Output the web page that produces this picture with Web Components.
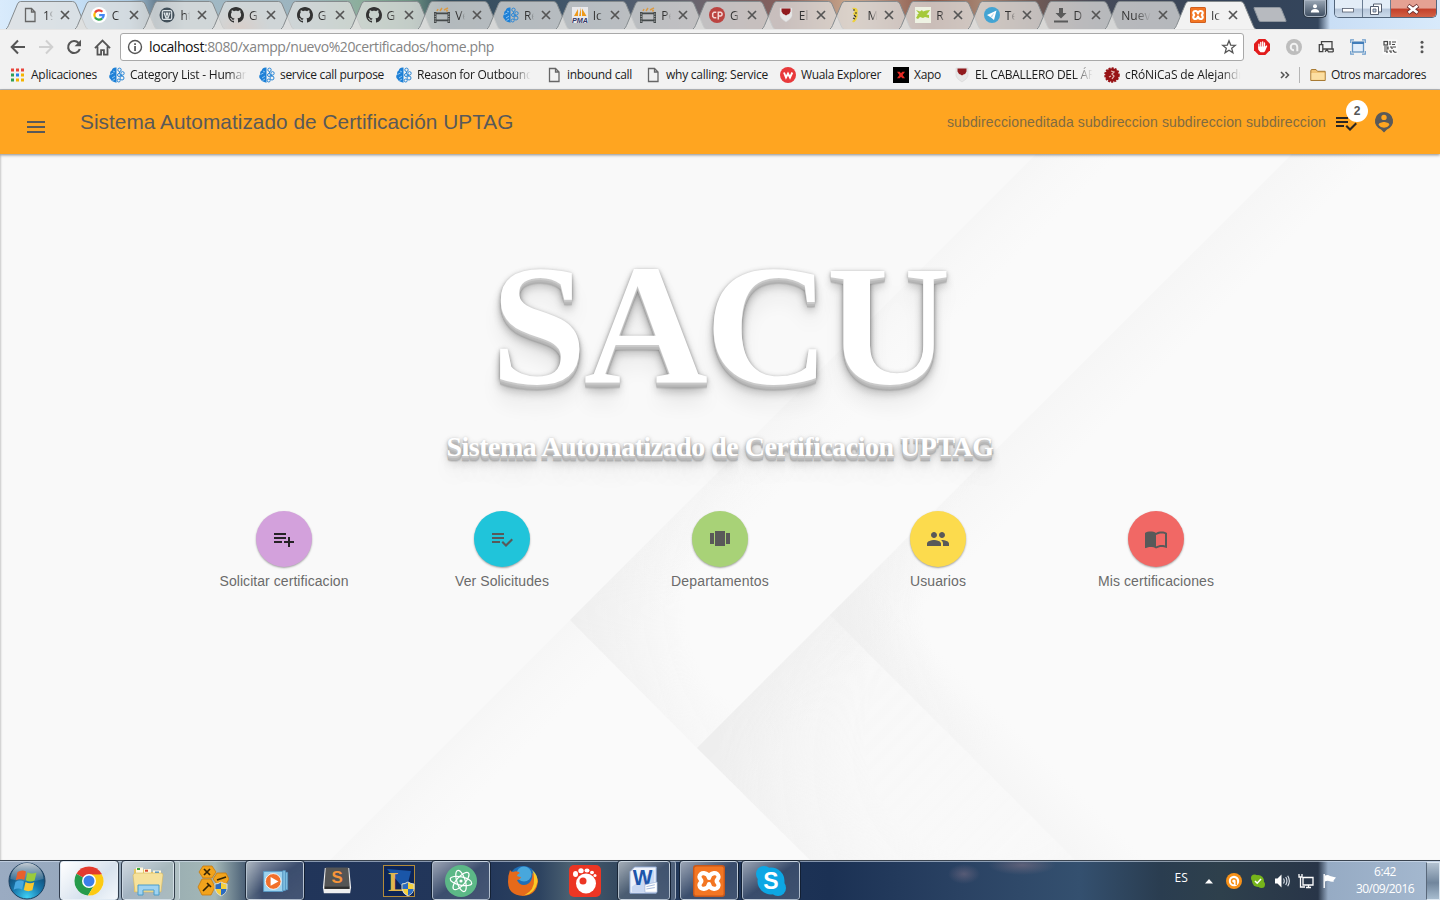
<!DOCTYPE html>
<html lang="es">
<head>
<meta charset="utf-8">
<title>SACU</title>
<style>
html,body{margin:0;height:100%;overflow:hidden}
body{display:flex;flex-direction:column;width:1440px;height:900px;background:#f9f9f9;font-family:"Liberation Sans",Arial,sans-serif}
</style>
</head>
<body>
<tab-strip></tab-strip>
<nav-bar></nav-bar>
<bookmarks-bar></bookmarks-bar>
<app-header></app-header>
<app-main></app-main>
<task-bar></task-bar>
<script>
const ICONS = {
page:[16,`<path d="M3.500 1.500h6l3.500 3.500v9.500h-9.500zM9.500 1.500v3.500h3.500" fill="none" stroke="#666" stroke-width="1.300"/>`],
google:[16,`<circle cx="8" cy="8" r="8" fill="#fff"/><g fill="none" stroke-width="2.200"><path d="M4 5.600A4.700 4.700 0 0 1 11.400 4.700" stroke="#ea4335"/><path d="M4 10.400A4.800 4.800 0 0 1 4 5.600" stroke="#fbbc05"/><path d="M11.200 11.400A4.700 4.700 0 0 1 4 10.400" stroke="#34a853"/><path d="M8.200 8.100h4.500A4.700 4.700 0 0 1 11.200 11.400" stroke="#4285f4"/></g>`],
manual:[16,`<circle cx="8" cy="8" r="7.500" fill="#42505a"/><rect x="3.300" y="3.600" width="9.400" height="8.800" rx="1.500" fill="none" stroke="#dde4e8" stroke-width="1.200"/><path d="M5 5.500l2 5.500h2l2-5.500M7 5.500l1 3 1-3" fill="none" stroke="#dde4e8" stroke-width="1.300"/>`],
github:[16,`<path fill="#333" d="M8 0C3.580 0 0 3.580 0 8c0 3.540 2.290 6.530 5.470 7.590.4.070.55-.17.55-.38 0-.19-.01-.82-.01-1.490-2.010.37-2.530-.49-2.690-.94-.09-.23-.48-.94-.82-1.130-.28-.15-.68-.52-.01-.53.63-.01 1.080.58 1.230.82.72 1.210 1.870.87 2.330.66.07-.52.28-.87.51-1.070-1.780-.2-3.640-.89-3.640-3.950 0-.87.31-1.590.82-2.150-.08-.2-.36-1.020.08-2.120 0 0 .67-.21 2.200.82.64-.18 1.320-.27 2-.27s1.360.09 2 .27c1.530-1.040 2.200-.82 2.200-.82.44 1.100.16 1.920.08 2.120.51.56.82 1.270.82 2.150 0 3.070-1.870 3.750-3.650 3.950.29.25.54.73.54 1.480 0 1.070-.01 1.930-.01 2.200 0 .21.15.46.55.38A8.010 8.010 0 0016 8c0-4.420-3.580-8-8-8z"/>`],
film:[16,`<path d="M0 5h2.500v11H0zM13.500 5H16v11h-2.500zM2 5.500h12v1.700H2zM2 12.500h12v1.800H2z" fill="#454a4b"/><path d="M1.200 6.500v9M14.800 6.500v9" stroke="#ccc" stroke-dasharray="1 1.400"/><path d="M3 4l1-2M6 4l2-3M10 3l4-2M12 4l2-.5" stroke="#d99a45" stroke-width="1.500"/>`],
brain:[16,`<path d="M7.500.5C4 .3 3 2 2.800 3.500 1 4.500 1 6 1.200 7-.3 8.500 0 11 1.500 12c.5 2 2.500 3 6 3.700z" fill="#1d80d6"/><path d="M1.500 7.500l3-1.500M3 11l3-2M4 4l2 1M3.500 13.500l2.500-1.500" stroke="#a8d6fa" stroke-width=".8"/><g fill="none" stroke="#2b87d6" stroke-width="1"><circle cx="10.500" cy="2.800" r="1.700"/><circle cx="13.500" cy="6.300" r="1.700"/><circle cx="10" cy="8" r="1.500"/><circle cx="13" cy="11" r="2"/><circle cx="9.700" cy="13.500" r="1.500"/><path d="M11 4.500l-1 2M11.500 8l2 1"/></g>`],
pma:[16,`<rect width="16" height="16" fill="#e9e9ec"/><path d="M2 9L6 2v7zM7 9L9 .5V9zM10 9V1.500L14.500 9z" fill="#ee9a1c"/><text x="0" y="15.500" font-size="7" font-weight="bold" font-style="italic" textLength="16" lengthAdjust="spacingAndGlyphs" fill="#333767" font-family="Liberation Sans">PMA</text>`],
cp:[16,`<circle cx="8" cy="8" r="8" fill="#bb4340"/><path d="M7.300 5.200H5L3.700 6.500v3L5 10.800h2.300M9.300 12.500V5.200h2.500L13 6.300v1.700L11.800 9H9.300" fill="none" stroke="#f4d5d3" stroke-width="1.500"/>`],
shield:[16,`<path d="M2 1h12v8q-1 3-6 6Q3 12 2 9z" fill="#e7e7e7" stroke="#d0d0d0" stroke-width=".5"/><path d="M3.500 1.500h9v3q-1 3-3 3L8 8.500 6.500 7.500q-2-.5-3-3z" fill="#911b1e"/>`],
bird:[16,`<path d="M6 1q7-1 5.500 5 1 5-3 9-3 1-2-1 3-3 2-6-3-1 0-3 0-2-2.500-4z" fill="#edd13c"/><path d="M7 3h2M9 6h2M8 8l2 2M9 12l-2-1" stroke="#333" stroke-width="1.200"/>`],
green:[16,`<rect width="16" height="16" fill="#eef2e3"/><path d="M1 3l4 1.500L7 3l1 1.500 3-1 4-.5-2 3-1.500 1.500 2.500.5v3l-4-1-2 1-3-1-2 2-2-1 2-3.500L1 8l3-1.500z" fill="#a5c93a"/>`],
telegram:[16,`<circle cx="8" cy="8" r="8" fill="#43a4d3"/><path d="M3 8l9.500-4.500L10 13l-3-2.500z" fill="#fff"/><path d="M6.500 9.500l4-4-2.500 5z" fill="#b4d9ec"/>`],
download:[16,`<path d="M6 1h4v5h3.500L8 11.500 2.500 6H6zM1 13.500h14v2H1z" fill="#5a5a5a"/>`],
xampp:[16,`<rect width="16" height="16" rx="1.500" fill="#c7591d"/><rect x=".7" y=".7" width="14.600" height="14.600" rx="1.100" fill="#f37623"/><path d="M8 6.500C7.600 3.500 3.400 3.200 3.200 5.900 3.200 7 4.200 7.300 4.200 8S3.200 9 3.200 10.100C3.400 12.800 7.600 12.500 8 9.500 8.400 12.500 12.600 12.800 12.800 10.100 12.800 9 11.800 8.700 11.800 8S12.800 7 12.800 5.900C12.600 3.200 8.400 3.500 8 6.500z" fill="none" stroke="#fff" stroke-width="2.100" stroke-linejoin="round"/>`],
close:[12,`<path d="M2 2l8 8M10 2l-8 8" stroke="#555" stroke-width="1.700"/>`],
apps:[16,`<g><path d="M1 1.500h3v3H1z" fill="#e8453c"/><path d="M6 1.500h3v3H6z" fill="#e8453c"/><path d="M11 1.500h3v3h-3z" fill="#e8453c"/><path d="M1 6.500h3v3H1z" fill="#2f9e55"/><path d="M6 6.500h3v3H6z" fill="#2680eb"/><path d="M11 6.500h3v3h-3z" fill="#f4b400"/><path d="M1 11.500h3v3H1z" fill="#2f9e55"/><path d="M6 11.500h3v3H6zM11 11.500h3v3h-3z" fill="#f4b400"/></g>`],
wuala:[16,`<circle cx="8" cy="8" r="8" fill="#e8393b"/><path d="M4 5.500l2 5 2-4 2 4 2.300-5" fill="none" stroke="#fff" stroke-width="1.900"/>`],
xapo:[16,`<rect width="16" height="16" fill="#000"/><path d="M4 4.800h2.700L8 6.300l1.300-1.500H12L9.600 8l2.400 3.200H9.300L8 9.700l-1.300 1.500H4L6.400 8z" fill="#e42a24"/>`],
cronicas:[16,`<circle cx="8" cy="8" r="6.800" fill="#971316"/><circle cx="8" cy="8" r="6.900" fill="none" stroke="#971316" stroke-width="1.800" stroke-dasharray="2 1.200"/><path d="M7 4l3 1-2 2 2 2-2 3M5 10l2-1" fill="none" stroke="#e4b9b5" stroke-width="1.300"/>`],
folder:[16,`<path d="M.8 3.800q0-1.300 1.200-1.300h4l1.500 1.800h7.700v9.200H.8z" fill="#f1c477" stroke="#a87b34" stroke-width="1"/><path d="M1.500 6h13v6.800h-13z" fill="#fcdfa2"/>`],
back:[16,`<path d="M15 8H2.500M8 1.500L1.700 8 8 14.500" fill="none" stroke="#555" stroke-width="2"/>`],
forward:[16,`<path d="M1 8h12.500M8 1.500L14.300 8 8 14.500" fill="none" stroke="#d0d0d0" stroke-width="2"/>`],
reload:[16,`<path d="M13.800 10A6 6 0 1 1 12.600 4" fill="none" stroke="#555" stroke-width="2.100"/><path d="M15 .8v6.400H8.600z" fill="#555"/>`],
home:[18,`<path d="M1 9.700L9 1.700l8 8M3.700 8v8.500H7.500v-4.700h3v4.700h3.800V8" fill="none" stroke="#555" stroke-width="1.900"/>`],
info:[16,`<circle cx="8" cy="8" r="6.500" fill="none" stroke="#555" stroke-width="1.400"/><path d="M7.200 4.200h1.700v1.700H7.200zM7.200 7h1.700v5H7.200z" fill="#555"/>`],
star:[16,`<path d="M8 1.800l1.700 4.300 4.600.3-3.600 2.900 1.200 4.500L8 11.300l-3.900 2.500 1.200-4.500L1.700 6.400l4.600-.3z" fill="none" stroke="#555" stroke-width="1.300"/>`],
adblock:[16,`<path d="M4.700 0h6.600L16 4.700v6.600L11.300 16H4.700L0 11.300V4.700z" fill="#e21c1c"/><path d="M4.900 9V5.200M6.800 8V3.300M8.700 8V2.800M10.500 9V4" stroke="#fff" stroke-width="1.300" stroke-linecap="round"/><path d="M4.300 7.500h6.800l1.400-1.300.8.800-2.300 5.300-1 1H6.500L4.300 10.800z" fill="#fff"/>`],
avast:[16,`<circle cx="8" cy="8" r="8" fill="#bdbdbd"/><path d="M11.300 12.300V8A3.300 3.300 0 1 0 8 11.300" fill="none" stroke="#f1f1f1" stroke-width="2"/>`],
devices:[16,`<path d="M3.500 5.500V2.600h10.500V10M1.300 5.600h3.500v7H1.300zM5 10h10.200v3M7 12.800l2-2.200 1.500 2.200h4.700" fill="none" stroke="#444" stroke-width="1.300"/>`],
capture:[16,`<rect x="2.500" y="3" width="11" height="10" fill="#e2eefb" stroke="#6595c2" stroke-width="1.300"/><path d="M2 4h12" stroke="#417dba" stroke-width="2"/><path d="M.7 4V.8H4M12 .8h3.300V4M.7 12v3.200H4M12 15.200h3.300V12" fill="none" stroke="#6b9ccc" stroke-width="1.200"/>`],
qr:[16,`<rect x=".5" y=".5" width="15" height="15" rx="1" fill="#fafafa"/><g fill="none" stroke="#444" stroke-width="1.200"><rect x="2" y="2.500" width="3.500" height="3.500"/><path d="M8 2v4M10 3h4M10 5.500h3M2 8h4v2H2M8 8h2v2M11 8h3M2 12h3v2M7 12h2v2M11 11q1 3 3.500 2"/></g>`],
more:[16,`<circle cx="8" cy="3.200" r="1.500" fill="#555"/><circle cx="8" cy="8" r="1.500" fill="#555"/><circle cx="8" cy="12.800" r="1.500" fill="#555"/>`],
overflow:[12,`<path d="M2 3l3 3-3 3M6.500 3l3 3-3 3" fill="none" stroke="#555" stroke-width="1.500"/>`],
menu:[24,`<path d="M3 18h18v-2H3v2zm0-5h18v-2H3v2zm0-7v2h18V6H3z" fill="currentColor"/>`],
listadd:[24,`<path d="M14 10H2v2h12v-2zm0-4H2v2h12V6zm4 8v-4h-2v4h-4v2h4v4h2v-4h4v-2h-4zM2 16h8v-2H2v2z" fill="currentColor"/>`],
listcheck:[24,`<path d="M14 10H2v2h12v-2zm0-4H2v2h12V6zM2 16h8v-2H2v2zm19.500-4.500L23 13l-6.990 7-4.510-4.500L13 14l3.010 3 5.490-5.500z" fill="currentColor"/>`],
carousel:[24,`<path d="M7 19h10V4H7v15zm-5-2h4V6H2v11zM18 6v11h4V6h-4z" fill="currentColor"/>`],
group:[24,`<path d="M16 11c1.660 0 2.990-1.340 2.990-3S17.660 5 16 5c-1.660 0-3 1.340-3 3s1.340 3 3 3zm-8 0c1.660 0 2.990-1.340 2.990-3S9.660 5 8 5C6.340 5 5 6.340 5 8s1.340 3 3 3zm0 2c-2.330 0-7 1.170-7 3.500V19h14v-2.500c0-2.330-4.670-3.500-7-3.500zm8 0c-.29 0-.62.020-.97.050 1.160.84 1.970 1.970 1.970 3.450V19h6v-2.500c0-2.330-4.670-3.500-7-3.500z" fill="currentColor"/>`],
book:[24,`<path d="M21 5c-1.110-.35-2.330-.5-3.500-.5-1.950 0-4.050.4-5.500 1.500-1.450-1.100-3.550-1.500-5.500-1.500S2.450 4.900 1 6v14.650c0 .25.25.5.5.5.1 0 .15-.05.25-.05C3.100 20.450 5.050 20 6.500 20c1.950 0 4.050.4 5.500 1.500 1.350-.85 3.800-1.500 5.500-1.500 1.650 0 3.350.3 4.750 1.050.1.050.15.050.25.050.25 0 .5-.25.5-.5V6c-.6-.45-1.250-.75-2-1zm0 13.500c-1.100-.35-2.300-.5-3.500-.5-1.700 0-4.150.65-5.500 1.500V8c1.350-.85 3.800-1.500 5.500-1.500 1.200 0 2.400.15 3.500.5v11.500z" fill="currentColor"/>`],
account:[24,`<path fill-rule="evenodd" d="M12 2a9 9 0 0 0-3 17.500l3 3 3-3A9 9 0 0 0 12 2zm0 2.700a2.700 2.700 0 1 1 0 5.400 2.700 2.700 0 0 1 0-5.400zM12 17.700a6.600 6.600 0 0 1-5.400-2.800c0-1.800 3.600-2.800 5.400-2.800s5.400 1 5.400 2.800A6.600 6.600 0 0 1 12 17.700z" fill="currentColor"/>`],
start:[38,`<defs><radialGradient id="a" cx=".5" cy=".95" r=".9"><stop offset="0" stop-color="#3fd0f4"/><stop offset=".45" stop-color="#1878ad"/><stop offset="1" stop-color="#0d3559"/></radialGradient><linearGradient id="b" x2="0" y2="1"><stop offset="0" stop-color="#fff" stop-opacity=".75"/><stop offset="1" stop-color="#fff" stop-opacity=".1"/></linearGradient></defs><circle cx="19" cy="19" r="18" fill="url(#a)" stroke="#1d3f5e"/><path d="M2.500 17a16.500 16 0 0 1 33 0Q19 22 2.500 17z" fill="url(#b)"/><path d="M9.500 10q4.500-2.800 8.500-.5l-1.700 8.500q-4.300-2-8.500.3z" fill="#e8602c"/><path d="M19.500 10.300q4 2.300 9 .2l-1.900 8q-4.600 2-8.800-.3z" fill="#9acb3c"/><path d="M7.500 19.700q4.500-2.200 8.500-.2l-1.900 8q-3.900-2-8.500.3z" fill="#48a8e0"/><path d="M17.500 20q4.200 2.200 8.800.3l-1.900 8q-4.500 1.800-8.600-.3z" fill="#fbc72d"/>`],
chrome:[32,`<circle cx="16" cy="16" r="14.500" fill="#fff"/><path d="M16 16L3.400 8.800A14.500 14.500 0 0 1 28.600 8.800z" fill="#e33b2e"/><path d="M16 16L3.400 8.800A14.500 14.500 0 0 0 15 30.500l6.800-11.200z" fill="#259b4b"/><path d="M16 9.300h12.800A14.500 14.500 0 0 1 15 30.500l6.800-11.200z" fill="#fcca14"/><path d="M16 9.300h12.800l-.4-.8H9z" fill="#e33b2e"/><circle cx="16" cy="16" r="7" fill="#fff"/><circle cx="16" cy="16" r="5.500" fill="#3c7fea"/>`],
explorer:[32,`<path d="M2 4h9l2 3h15v20H2z" fill="#e8c764"/><path d="M4 2.500h7V8H4zM12 4h7v5h-7zM21 5.500h8V10h-8z" fill="#fff8dc"/><path d="M5 3h3v2H5z" fill="#3ba639"/><path d="M13 4.700h3v2h-3z" fill="#d7462d"/><path d="M23 6.500h4v2h-4z" fill="#3a8ddb"/><path d="M1 10q1-2 3-2h25q2 0 2 2l-2 17H3z" fill="#f6e19b" stroke="#d3b55c" stroke-width=".6"/><path d="M6 30V20h21v10h-5v-5H11v5z" fill="#9fd3f1" stroke="#4a9cc9" stroke-width="1"/>`],
bee:[32,`<g fill="#f2a31c" stroke="#c67a0c" stroke-width=".8"><path d="M6 1h9l4 6-4 6H6L2 7z"/><path d="M20 8h9l3 6-3 5h-9l-4-5z"/><path d="M5 14h9l4 8-4 8H5l-4-8z"/></g><path d="M7 4l6 6M13 4L7 10M20 15l9-3M6 26l6-6M10 18l4 4" stroke="#342405" stroke-width="1.700"/><path d="M18 19q3 0 6-2 3 2 6 2v5q-1 5-6 7-5-2-6-7z" fill="#f6d13b" stroke="#d5dbe3" stroke-width="1"/><path d="M24 17.500V24h-5.500v-4.500q3 0 5.500-2zM24 24h5.500q-.5 4.500-5.500 6.500z" fill="#2a6bc2"/>`],
wmp:[32,`<path d="M3 5h22v23H3z" fill="#9cd2ee" stroke="#5699c7"/><path d="M25 4h3v23h-3zM28 6h2.500v20H28z" fill="#7ebde0" stroke="#4d8fbd" stroke-width=".6"/><circle cx="14" cy="16.500" r="9" fill="#f1702a" stroke="#fff" stroke-width="1"/><path d="M11 11.500l9 5-9 5z" fill="#fff"/>`],
sublime:[32,`<path d="M3 2h26l2 21-1 6H2l-1-6z" fill="#efefef"/><path d="M4 1.500h24l1.500 20h-27z" fill="#555"/><path d="M2.500 21.500h27v3h-27z" fill="#2f2f2f"/><text x="16" y="18" text-anchor="middle" font-size="18" font-weight="bold" fill="#f7953a" font-family="Liberation Sans">S</text>`],
lol:[32,`<rect x=".5" y=".5" width="31" height="31" fill="#0d2557" stroke="#b38b3a"/><path d="M4 4l24 2-5 20z" fill="#1a56a8"/><text x="5" y="26" font-size="27" font-weight="bold" fill="#e0b64d" font-family="Liberation Serif">L</text><path d="M19 19q3 0 6-2 3 2 6 2v5q-1 5-6 7-5-2-6-7z" fill="#f6d13b" stroke="#d5dbe3"/><path d="M25 17.500V24h-5.500v-4.500q3 0 5.500-2zM25 24h5.500q-.5 4.500-5.500 6.500z" fill="#2a6bc2"/>`],
atom:[32,`<circle cx="16" cy="16" r="16" fill="#5cb887"/><g fill="none" stroke="#fff" stroke-width="1.200"><ellipse cx="16" cy="16" rx="11" ry="4.200" transform="rotate(12 16 16)"/><ellipse cx="16" cy="16" rx="11" ry="4.200" transform="rotate(72 16 16)"/><ellipse cx="16" cy="16" rx="11" ry="4.200" transform="rotate(132 16 16)"/></g><circle cx="16" cy="16" r="1.600" fill="#fff"/>`],
firefox:[32,`<circle cx="16" cy="15" r="14" fill="#1e6fb8"/><circle cx="17" cy="9" r="7.500" fill="#48a7dc"/><path d="M3 5q1 2 3 2 4-2 7 1-3 1-3 3 2 1 4 1-1 3-4 3 2 5 7 5 6 0 8-7 1-3 0-5 5 3 6 8Q30 30 16 31 1 30 1 17 1 10 3 5z" fill="#e66a1b"/><path d="M25 5q6 5 5.500 12Q28 29 17 30.500 28 25 27 14q0-6-2-9z" fill="#fbc926"/>`],
gom:[32,`<rect width="32" height="32" rx="5" fill="#ec3624"/><circle cx="17" cy="18.500" r="10" fill="#fff"/><circle cx="14" cy="16" r="3.500" fill="#ec3624"/><g fill="#fff"><ellipse cx="6.500" cy="9" rx="2.500" ry="3"/><ellipse cx="12" cy="5.800" rx="2.700" ry="2.500"/><ellipse cx="18" cy="5.500" rx="2.500" ry="2"/><ellipse cx="23" cy="7.500" rx="2" ry="1.800"/><ellipse cx="26" cy="10.500" rx="1.500" ry="1.500"/></g>`],
word:[32,`<path d="M6 1h23v28H1V6z" fill="#edf2fb" stroke="#8ea8d4"/><path d="M3 22L27 4v24H3z" fill="#c9d8f2"/><text x="4" y="20.500" font-size="23" font-weight="bold" font-family="Liberation Sans" fill="#1c55ab" textLength="21" lengthAdjust="spacingAndGlyphs">W</text><path d="M17 20l13-3v11H17z" fill="#fff" stroke="#91a9d0" stroke-width=".6"/><path d="M18.500 22l9-2M18.500 24.500l9-1.500" stroke="#9fb5da"/>`],
skype:[32,`<circle cx="16" cy="16" r="13.500" fill="#0da7e4"/><circle cx="9" cy="9" r="8" fill="#0da7e4"/><circle cx="23" cy="23" r="8" fill="#0da7e4"/><text x="16" y="24" text-anchor="middle" font-size="23" font-weight="bold" fill="#fff" font-family="Liberation Sans">S</text>`],
trayavast:[16,`<circle cx="8" cy="8" r="8" fill="#f79219"/><circle cx="8" cy="8" r="5.200" fill="#fff"/><path d="M10.300 12V8.200A2.400 2.400 0 1 0 8 10.500" fill="none" stroke="#f79219" stroke-width="1.500"/>`],
trayskype:[16,`<circle cx="8" cy="8" r="6" fill="#76b51b"/><circle cx="4.500" cy="5" r="3.500" fill="#76b51b"/><circle cx="11.500" cy="11.500" r="3.500" fill="#76b51b"/><path d="M5 8l2.200 2.200L11 6" fill="none" stroke="#fff" stroke-width="1.600"/>`],
speaker:[16,`<path d="M1 5.500h2.500L7.500 1.500v13l-4-4H1z" fill="#fff"/><path d="M9.500 5.500q1.500 2.500 0 5M11.700 4q2.500 4 0 8M13.700 2.800q3.300 5.200 0 10.400" fill="none" stroke="#dfe6ee" stroke-width="1.100"/>`],
network:[16,`<path d="M5 4.500h10v7.500H5zM8 14.500h5M10.500 12v2.500M1 1v3h3V1M2.500 4v10H7" fill="none" stroke="#fff" stroke-width="1.300"/>`],
flag:[16,`<path d="M2.200 1v14" stroke="#fff" stroke-width="1.400"/><path d="M3 2.500q3-1 5 .5l6 1.500-2.500 3 .5 1q-3 .5-5-.5-2-.5-4 .5z" fill="#fff"/>`],
up:[10,`<path d="M1 7.500L5 3l4 4.500z" fill="#fff"/>`],
person:[12,`<circle cx="6" cy="3.200" r="2" fill="#fff"/><path d="M1.800 9.500q0-3.500 4.200-3.500t4.200 3.500z" fill="#fff"/>`],
min:[14,`<rect x="1.500" y="6.500" width="11" height="3.500" fill="#fff" stroke="#555e6e" stroke-width=".8"/>`],
max:[14,`<path d="M4.500 2h8v8h-8z" fill="#fff" stroke="#555e6e"/><path d="M1.500 4.500h8v8h-8z" fill="#fff" stroke="#555e6e"/><path d="M4 7h3v3H4z" fill="#b9cbe0" stroke="#555e6e" stroke-width=".8"/>`],
winclose:[14,`<path d="M2 3.500L12 11M12 3.500L2 11" stroke="#6b3030" stroke-width="4.300"/><path d="M2.500 3.800l9 6.900M11.500 3.800l-9 6.900" stroke="#fff" stroke-width="2.700"/>`]
};
const UI = '"Open Sans","Noto Sans",sans-serif';
function define(name, html, init){
  const t = document.createElement('template');
  customElements.define(name, class extends HTMLElement{
    constructor(){ super(); this.attachShadow({mode:'open'}); }
    connectedCallback(){
      t.innerHTML = typeof html === 'function' ? html(this) : html;
      this.shadowRoot.replaceChildren(t.content.cloneNode(true));
      if(init) init(this);
    }
  });
}
define('ui-icon', el => {
  const [box, body] = ICONS[el.getAttribute('name')];
  const s = el.getAttribute('size') || box;
  return `<style>:host{display:block;flex:none;width:${s}px;height:${s}px}svg{display:block}</style><svg width="${s}" height="${s}" viewBox="0 0 ${box} ${box}">${body}</svg>`;
});
/* Spreads a label over a given width by adjusting its tracking. */
define('fit-text', `<style>:host{display:block;white-space:nowrap;flex:none}span{display:inline-block;white-space:nowrap}</style><span><slot></slot></span>`, el => {
  const span = el.shadowRoot.querySelector('span'), w = +el.getAttribute('w');
  const natural = span.getBoundingClientRect().width, n = el.textContent.length;
  span.style.letterSpacing = ((w - natural) / n) + 'px';
});
define('browser-tab', el => {
  const active = el.hasAttribute('active');
  return `<style>:host{display:block;flex:none;width:82px;height:28px;margin-right:-13.300px;position:relative;${active?'z-index:2':''}}
  .bg{position:absolute;inset:0}
  .row{position:relative;display:flex;align-items:center;height:28px;padding:0 0 0 16px;box-sizing:border-box}
  .t{flex:none;width:${el.getAttribute('icon')?10:30}px;margin-left:${el.getAttribute('icon')?5:0}px;margin-right:6px;overflow:hidden;white-space:nowrap;font:12px ${UI};color:#333;-webkit-mask-image:linear-gradient(90deg,#000 45%,transparent)}</style>
  <svg class="bg" width="82" height="28"><path d="M0 28Q1.500 27 2.500 24.500L11.500 3Q12.500 .5 14.500 .5H66.500Q69 .5 70 3L79 24.500Q80 27 81.500 28" fill="${active?'#f2f2f2':'rgba(224,224,222,.74)'}" stroke="#858b8e" stroke-width="1"/></svg>
  <div class="row">${el.getAttribute('icon')?`<ui-icon name="${el.getAttribute('icon')}"></ui-icon>`:''}<span class="t"><slot></slot></span><ui-icon name="close" size="12"></ui-icon></div>`;
});
const TABS = [['page','19'],['google','C'],['manual','ht'],['github','G'],['github','G'],['github','G'],['film','Ve'],['brain','Re'],['pma','Ic'],['film','Pe'],['cp','G'],['shield','El'],['bird','M'],['green','R'],['telegram','Te'],['download','D'],['','Nuev'],['xampp','Ic']];
define('tab-strip', `<style>:host{display:flex;flex:none;height:29px;padding-left:6px;box-sizing:border-box;align-items:flex-start;
 background:radial-gradient(ellipse 30px 22px at 240px 28px,rgba(218,140,110,.6),transparent),linear-gradient(90deg,#d9ebfc 0,#c4def5 80px,#a9c8e0 130px,#6c8394 155px,#a2bac6 185px,#9cb4bf 300px,#8cae9c 360px,#6f9584 410px,#344c5c 445px,#44586d 600px,#68656f 690px,#855f5c 780px,#caa78b 850px,#b99988 870px,#8a5748 930px,#a58471 980px,#6d5956 1040px,#454a59 1100px,#344358 1240px,#34455c 1318px,#c9def5 1330px,#d8eafb 1440px)}
 browser-tab{margin-top:1px}
 .new{height:15px;margin:7px 0 0 13px;background:#b7babf;border:1px solid #8f969f;border-radius:2px;box-sizing:border-box;width:28px;transform:skewX(22deg);flex:none}
 .b{display:flex;align-items:center;justify-content:center;box-sizing:border-box;height:18px}
 .user{width:24px;margin-left:19px;border:1px solid #293542;border-top:0;border-radius:0 0 5px 5px;background:linear-gradient(#9aa7b5,#3b4b5f);box-shadow:inset 0 0 0 1px #a9b4c2;flex:none}
 .win{display:flex;margin-left:7px;width:103px;height:18px;border:1px solid #52657b;border-top:0;border-radius:0 0 5px 5px;overflow:hidden;box-sizing:border-box;flex:none}
 .win .b{width:28px;background:linear-gradient(#e3edf7 45%,#b6c6da 50%,#cfdeed);border-right:1px solid #6a7d93}
 .win .b.x{flex:1;background:linear-gradient(#e5a193 45%,#c3402a 50%,#d4664a);border:0}</style>
 ${TABS.map((t,i)=>`<browser-tab icon="${t[0]}"${i==17?' active':''}>${t[1]}</browser-tab>`).join('')}
 <span class="new"></span><span class="b user"><ui-icon name="person"></ui-icon></span>
 <div class="win"><span class="b"><ui-icon name="min"></ui-icon></span><span class="b"><ui-icon name="max"></ui-icon></span><span class="b x"><ui-icon name="winclose"></ui-icon></span></div>`);
define('nav-bar', `<style>:host{display:flex;flex:none;height:35px;align-items:center;background:#f2f2f2;padding-left:10px;box-sizing:border-box;border-top:1px solid #e5e5e5}
 .nav{display:flex;gap:12px;width:110px;align-items:center}
 .box{display:flex;align-items:center;width:1124px;height:28px;box-sizing:border-box;border:1px solid #a9a9a9;border-radius:3px;background:#fff;padding:0 6px;font:14px ${UI};color:#848484}
 b{font-weight:400;color:#111}fit-text{margin:-1px 0 0 6px}.star{margin-left:auto}
 .ext{display:flex;gap:16px;margin-left:10px}</style>
 <div class="nav"><ui-icon name="back"></ui-icon><ui-icon name="forward"></ui-icon><ui-icon name="reload"></ui-icon><ui-icon name="home" size="17"></ui-icon></div>
 <div class="box"><ui-icon name="info"></ui-icon><fit-text w="345"><b>localhost</b>:8080/xampp/nuevo%20certificados/home.php</fit-text><ui-icon class="star" name="star"></ui-icon></div>
 <div class="ext">${['adblock','avast','devices','capture','qr','more'].map(n=>`<ui-icon name="${n}"></ui-icon>`).join('')}</div>`);
define('bookmark-item', el => `<style>:host{display:flex;flex:none;align-items:center;width:${el.getAttribute('box')}px;gap:5px}
 .c{width:${el.getAttribute('w')}px;margin-top:-2px;${el.hasAttribute('fade')?'-webkit-mask-image:linear-gradient(90deg,#000 82%,transparent 98%)':''}}</style><ui-icon name="${el.getAttribute('icon')}"></ui-icon><div class="c"><fit-text w="${el.getAttribute('w')}">${el.textContent}</fit-text></div>`);
const MARKS = [['apps','Aplicaciones',99,66],['brain','Category List - Human',150,119,1],['brain','service call purpose',137,104],['brain','Reason for Outbound',150,116,1],['page','inbound call',99,65],['page','why calling: Service',135,102],['wuala','Wuala Explorer',113,80],['xapo','Xapo',61,27],['shield','EL CABALLERO DEL ÁR',150,120,1],['cronicas','cRóNiCaS de Alejandr',175,118,1]];
define('bookmarks-bar', `<style>:host{display:flex;flex:none;height:26px;align-items:center;background:#f2f2f2;padding:0 0 3px 10px;box-sizing:border-box;font:12px ${UI};color:#1b1b1b;border-bottom:1px solid #b9bcc0}
 .sep{width:1px;height:16px;background:#b5b5b5;margin:0 10px 0 8px}</style>
 ${MARKS.map(m=>`<bookmark-item icon="${m[0]}" box="${m[2]}" w="${m[3]}" ${m[4]?'fade':''}>${m[1]}</bookmark-item>`).join('')}
 <ui-icon name="overflow"></ui-icon><span class="sep"></span><bookmark-item icon="folder" box="120" w="95">Otros marcadores</bookmark-item>`);
define('app-header', `<style>:host{display:flex;flex:none;height:64px;align-items:center;background:#ffa520;color:#595959;padding:0 44px 0 24px;box-sizing:border-box;position:relative;z-index:2;box-shadow:0 1px 3px rgba(0,0,0,.45)}
 .menu{margin:9px 32px 0 0}.title{font-size:20.800px}.who{margin-left:auto;font-size:14px;color:#806b42}
 .n{position:relative;color:#2b2622;margin:1px 14px 0 8px}
 .badge{position:absolute;left:12px;top:-11px;width:22px;height:22px;border-radius:50%;background:#fff;color:#555;font:bold 12px/22px "Liberation Sans",sans-serif;text-align:center}</style>
 <ui-icon class="menu" name="menu"></ui-icon><fit-text class="title" w="433.500">Sistema Automatizado de Certificación UPTAG</fit-text>
 <fit-text class="who" w="379">subdireccioneditada subdireccion subdireccion subdireccion</fit-text>
 <div class="n"><ui-icon name="listcheck"></ui-icon><span class="badge">2</span></div><ui-icon name="account"></ui-icon>`);
define('action-tile', el => `<style>:host{display:flex;flex-direction:column;align-items:center}
 .c{width:56px;height:56px;border-radius:50%;display:flex;align-items:center;justify-content:center;background:${el.getAttribute('fill')};color:${el.getAttribute('ink')||'#595959'};box-shadow:0 1px 2px rgba(0,0,0,.35)}
 fit-text{margin-top:5px;font:14px/18px "Liberation Sans",sans-serif;color:#6b6b6b}</style>
 <div class="c"><ui-icon name="${el.getAttribute('icon')}"></ui-icon></div><fit-text w="${el.getAttribute('w')}">${el.textContent}</fit-text>`);
define('page-backdrop', `<style>:host{display:block;position:absolute;inset:0}svg{display:block}</style>
 <svg width="1440" height="706" viewBox="0 154 1440 706"><defs>
 <linearGradient id="sa" gradientUnits="userSpaceOnUse" x1="570" y1="620" x2="612" y2="662"><stop offset="0" stop-color="#f6f6f6"/><stop offset=".4" stop-color="#f8f8f8"/><stop offset="1" stop-color="#fafafa"/></linearGradient>
 <linearGradient id="sb" gradientUnits="userSpaceOnUse" x1="697" y1="748" x2="740" y2="791"><stop offset="0" stop-color="#f6f6f6"/><stop offset=".5" stop-color="#f8f8f8"/><stop offset="1" stop-color="#fafafa"/></linearGradient>
 <linearGradient id="sd" gradientUnits="userSpaceOnUse" x1="830" y1="615" x2="866" y2="579"><stop offset="0" stop-color="#eee" stop-opacity=".35"/><stop offset="1" stop-color="#eee" stop-opacity="0"/></linearGradient>
 <radialGradient id="ra" gradientUnits="userSpaceOnUse" cx="800" cy="610" r="240"><stop offset=".48" stop-color="#eee" stop-opacity="0"/><stop offset="1" stop-color="#eee"/></radialGradient>
 <radialGradient id="rb" gradientUnits="userSpaceOnUse" cx="980" cy="740" r="290"><stop offset=".4" stop-color="#eee" stop-opacity=".15"/><stop offset=".65" stop-color="#eee" stop-opacity=".5"/><stop offset=".9" stop-color="#eee"/></radialGradient>
 <radialGradient id="rc" gradientUnits="userSpaceOnUse" cx="1050" cy="600" r="230"><stop offset=".55" stop-color="#eee" stop-opacity="0"/><stop offset="1" stop-color="#eee"/></radialGradient>
 <radialGradient id="fa" gradientUnits="userSpaceOnUse" cx="590" cy="640" r="240"><stop offset=".3" stop-color="#fff"/><stop offset="1" stop-color="#000"/></radialGradient>
 <radialGradient id="fc" gradientUnits="userSpaceOnUse" cx="830" cy="615" r="210"><stop offset=".2" stop-color="#fff"/><stop offset="1" stop-color="#000"/></radialGradient>
 <linearGradient id="fb" gradientUnits="userSpaceOnUse" x1="780" y1="665" x2="990" y2="875"><stop offset="0" stop-color="#fff"/><stop offset="1" stop-color="#777"/></linearGradient>
 <mask id="ma" maskUnits="userSpaceOnUse" x="0" y="0" width="1440" height="900"><path d="M0 0h1440v900H0z" fill="url(#fa)"/></mask>
 <mask id="mb" maskUnits="userSpaceOnUse" x="0" y="0" width="1440" height="900"><path d="M0 0h1440v900H0z" fill="url(#fb)"/></mask>
 <mask id="mc" maskUnits="userSpaceOnUse" x="0" y="0" width="1440" height="900"><path d="M0 0h1440v900H0z" fill="url(#fc)"/></mask></defs>
 <path d="M0 154h1440v706H0z" fill="#f9f9f9"/><path d="M1036 154H1440V860H330z" fill="url(#sa)"/>
 <path d="M570 620L1036 154H1290L697 748z" fill="url(#ra)" mask="url(#ma)"/>
 <path d="M1292 154H1440V860H810L697 748z" fill="url(#sb)"/>
 <path d="M697 748L830 615 1075 860H810z" fill="url(#rb)" mask="url(#mb)"/>
 <path d="M830 615L1290 154H1440V860H1075z" fill="url(#sd)"/>
 <path d="M830 615L1290 154H1440V860H1075z" fill="url(#rc)" mask="url(#mc)"/></svg>`);
const TILES = [['listadd','#d3a1dc','Solicitar certificacion',129,'#262226'],['listcheck','#20c4da','Ver Solicitudes',94],['carousel','#a8d277','Departamentos',98],['group','#fcdb4d','Usuarios',56],['book','#f16865','Mis certificaciones',116]];
define('app-main', `<style>:host{display:block;flex:none;height:706px;position:relative;overflow:hidden}
 .in{position:relative;display:flex;flex-direction:column;align-items:center;height:706px;box-shadow:inset 2px 0 2px -1px rgba(0,0,0,.2)}
 h1,h2{margin:0;font-family:"Liberation Serif",serif;font-weight:700;color:#fff;text-shadow:0 1px 0 #ccc,0 2px 0 #c9c9c9,0 3px 0 #bbb,0 4px 0 #b9b9b9,0 5px 0 #b0b0b0,0 6px 1px rgba(0,0,0,.1),0 0 5px rgba(0,0,0,.1),0 1px 3px rgba(0,0,0,.2),0 3px 5px rgba(0,0,0,.15),0 5px 10px rgba(0,0,0,.2),0 10px 10px rgba(0,0,0,.13),0 20px 20px rgba(0,0,0,.08)}
 h1{font-size:172px;letter-spacing:-2.800px;line-height:190px;margin-top:76px;padding-right:1px}h2{font-size:28px;line-height:32px;margin-top:11px;height:32px}
 .tiles{display:grid;grid-template-columns:repeat(5,218px);margin-top:48px}</style>
 <page-backdrop></page-backdrop><div class="in"><h1>SACU</h1><h2><fit-text w="547">Sistema Automatizado de Certificacion UPTAG</fit-text></h2>
 <div class="tiles">${TILES.map(t=>`<action-tile icon="${t[0]}" fill="${t[1]}" w="${t[3]}" ${t[4]?`ink="${t[4]}"`:''}>${t[2]}</action-tile>`).join('')}</div></div>`);
define('task-button', el => {
  const k = el.getAttribute('kind');
  const frame = k==='active' ? 'background:linear-gradient(135deg,#fff,#d7e2ee 60%,#f3f7fb)' : 'background:linear-gradient(145deg,rgba(255,255,255,.55),rgba(255,255,255,.12) 50%,rgba(255,255,255,.16))';
  const stack = k==='stack';
  return `<style>:host{display:flex;flex:none;width:58px;height:39px}
  .f{box-sizing:border-box;width:${stack?'52px':'58px'};display:flex;align-items:center;justify-content:center;${k?frame+';border:1px solid rgba(225,235,245,.65);outline:1px solid rgba(15,25,40,.75);outline-offset:0;border-radius:3px':''}}
  .e{width:${stack?5:0}px;box-sizing:border-box;${stack?'border-right:1px solid rgba(225,235,245,.6);border-radius:0 3px 3px 0;background:rgba(255,255,255,.2);margin-left:1px':''}}</style><div class="f"><ui-icon name="${el.getAttribute('icon')}" size="${el.getAttribute('size')||32}"></ui-icon></div><div class="e"></div>`;
});
const TASKS = [['chrome','active'],['explorer','stack'],['bee',''],['wmp','on',28],['sublime','',30],['lol',''],['atom','on'],['firefox',''],['gom',''],['word','stack',30],['xampp','on'],['skype','on']];
define('task-bar', `<style>:host{display:flex;flex:none;height:40px;box-sizing:border-box;border-top:1px solid #3a4450;padding-left:8px;align-items:center;color:#fff;font:12px ${UI};box-shadow:inset 0 1px 0 rgba(220,232,245,.55);
 background:radial-gradient(ellipse 34px 10px at 1022px 4px,rgba(150,125,140,.45),transparent),radial-gradient(ellipse 16px 10px at 964px 13px,rgba(140,120,140,.45),transparent),linear-gradient(90deg,#9aabc2 0,#95a7bb 110px,#9cb0b3 180px,#a4b8b7 215px,#5a6f81 240px,#21355a 262px,#22365a 480px,#2d4360 540px,#4b6071 570px,#33485f 620px,#20365a 690px,#1b3154 830px,#2a4263 960px,#34506f 1080px,#2a3d50 1160px,#2e404c 1220px,#283548 1318px,#96abc4 1328px,#a3b7ce 1424px)}
 .start{width:52px}.apps{display:flex;gap:4px}.tray{display:flex;align-items:center;margin-left:auto;height:39px}
 .es{margin:-7px 16px 0 0}
 .clock{display:flex;flex-direction:column;align-items:center;width:58px;margin:-1px 12px 0 18px;line-height:17px}
 .show{width:14px;height:38px;box-sizing:border-box;border:1px solid #dbe6f0;border-left-color:#59687a;background:linear-gradient(#b3c2d1,#71869d 55%,#a7bccf)}</style>
 <div class="start"><ui-icon name="start"></ui-icon></div>
 <div class="apps">${TASKS.map(t=>`<task-button icon="${t[0]}" kind="${t[1]}" size="${t[2]||32}"></task-button>`).join('')}</div>
 <div class="tray"><fit-text class="es" w="13.500">ES</fit-text><ui-icon name="up" style="margin-right:12px"></ui-icon><ui-icon name="trayavast" style="margin-right:8px"></ui-icon><ui-icon name="trayskype" style="margin-right:8px"></ui-icon><ui-icon name="speaker" style="margin-right:8px"></ui-icon><ui-icon name="network" style="margin-right:8px"></ui-icon><ui-icon name="flag"></ui-icon>
 <div class="clock"><fit-text w="22">6:42</fit-text><fit-text w="58">30/09/2016</fit-text></div><div class="show"></div></div>`);
</script>
</body>
</html>
